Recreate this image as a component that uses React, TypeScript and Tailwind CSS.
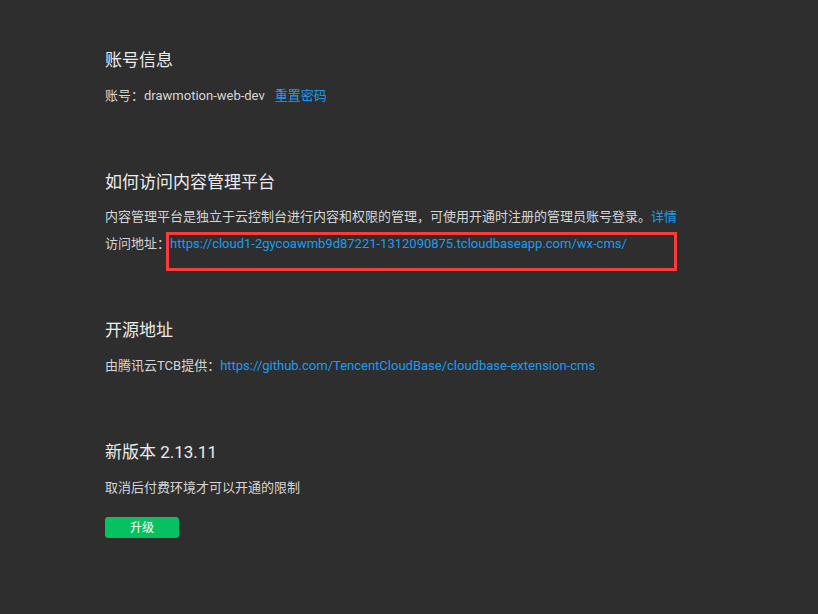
export default function App() {
  const font = { fontFamily: 'Roboto, "Noto Sans CJK SC", sans-serif' };
  return (
    <div className="min-h-[614px] w-full bg-[#2e2e2e] px-[105px] pt-[46px] text-[13px] text-[#d6d6d6]" style={font}>
      {/* 账号信息 */}
      <section className="mb-[62px]">
        <h2 className="text-[17px] leading-[28px] text-[#ececec]">账号信息</h2>
        <p className="mt-[12px] leading-[20px]">
          账号：drawmotion-web-dev
          <a className="ml-[10px] text-[#1e9cf0]">重置密码</a>
        </p>
      </section>

      {/* 如何访问 */}
      <section className="mb-[62px]">
        <h2 className="text-[17px] leading-[28px] text-[#ececec]">如何访问内容管理平台</h2>
        <p className="mt-[11px] leading-[20px]">
          内容管理平台是独立于云控制台进行内容和权限的管理，可使用开通时注册的管理员账号登录。
          <a className="text-[#1e9cf0]">详情</a>
        </p>
        <p className="mt-[7px] leading-[20px]">
          访问地址：
          <span className="relative">
            <a className="text-[#1e9cf0]">https://cloud1-2gycoawmb9d87221-1312090875.tcloudbaseapp.com/wx-cms/</a>
            <span className="pointer-events-none absolute -left-[4px] -top-[4px] h-[39px] w-[511px] border-[3px] border-[#fb3a3a]" />
          </span>
        </p>
      </section>

      {/* 开源地址 */}
      <section className="mb-[62px]">
        <h2 className="text-[17px] leading-[28px] text-[#ececec]">开源地址</h2>
        <p className="mt-[12px] leading-[20px]">
          由腾讯云TCB提供：
          <a className="text-[#1e9cf0]">https://github.com/TencentCloudBase/cloudbase-extension-cms</a>
        </p>
      </section>

      {/* 新版本 */}
      <section>
        <h2 className="text-[17px] leading-[28px] text-[#ececec]">新版本 2.13.11</h2>
        <p className="mt-[12px] leading-[20px]">取消后付费环境才可以开通的限制</p>
        <button className="mt-[19px] flex h-[21px] w-[74px] items-center justify-center rounded-[3px] bg-[#07c160] text-[12px] text-white">
          升级
        </button>
      </section>
    </div>
  );
}
